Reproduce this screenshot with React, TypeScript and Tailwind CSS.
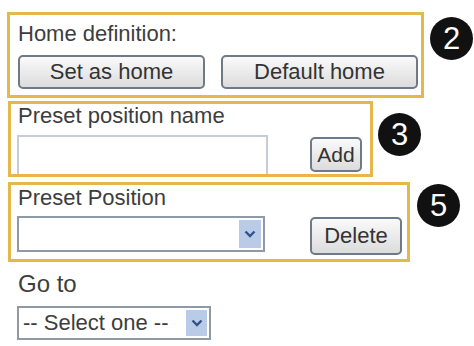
import React from "react";

const font = { fontFamily: '"Liberation Sans", Arial, sans-serif' };

function Badge({ n }: { n: string }) {
  return (
    <div className="flex h-[43px] w-[43px] items-center justify-center rounded-full bg-[#111] text-[31px] leading-none text-white">
      {n}
    </div>
  );
}

function Btn({ children, className }: { children: React.ReactNode; className: string }) {
  return (
    <button
      className={`rounded-[5px] border-2 border-[#6f7a88] bg-gradient-to-b from-[#fafafa] to-[#dcdcdc] leading-none text-[#333] ${className}`}
    >
      {children}
    </button>
  );
}

function Arrow({ className }: { className: string }) {
  return (
    <div className={`flex items-center justify-center bg-[#b9cbe6] ${className}`}>
      <svg width="12" height="8" viewBox="0 0 12 8">
        <path d="M1.5 1.5 L6 6 L10.5 1.5" fill="none" stroke="#34528c" strokeWidth="2.4" />
      </svg>
    </div>
  );
}

export default function App() {
  return (
    <div className="h-[346px] w-[474px] bg-white text-[#3d3d3d]" style={font}>
      <div className="flex flex-col pl-[7px] pt-[12px]">
        {/* home definition */}
        <div className="flex items-start">
          <div className="h-[86px] w-[417px] border-[3px] border-[#e6b84c] pl-[8px] pr-[3px] pt-[8px]">
            <div className="text-[22px] leading-[22px]">Home definition:</div>
            <div className="mt-[10px] flex gap-[16px]">
              <Btn className="h-[34px] w-[187px] text-[22px]">Set as home</Btn>
              <Btn className="h-[34px] w-[197px] text-[22px]">Default home</Btn>
            </div>
          </div>
          <div className="ml-[6px] mt-[5px]">
            <Badge n="2" />
          </div>
        </div>

        {/* preset name */}
        <div className="mt-[3px] flex items-start pl-[1px]">
          <div className="flex h-[76px] w-[365px] flex-col border-[3px] border-[#e6b84c] pl-[6px] pt-[1px]">
            <div className="pl-[1px] text-[22px] leading-[22px]">Preset position name</div>
            <div className="mt-[8px] flex flex-1 items-start">
              <div className="h-full w-[251px] border-2 border-b-0 border-[#c5ccd6] bg-white" />
              <Btn className="ml-[42px] mt-[2px] h-[35px] w-[52px] text-[21px]">Add</Btn>
            </div>
          </div>
          <div className="ml-[5px] mt-[12px]">
            <Badge n="3" />
          </div>
        </div>

        {/* preset position */}
        <div className="mt-[5px] flex items-start pl-[1px]">
          <div className="h-[80px] w-[402px] border-[3px] border-[#e6b84c] pl-[6px] pt-[2px]">
            <div className="pl-[1px] text-[22px] leading-[22px]">Preset Position</div>
            <div className="mt-[7px] flex items-start">
              <div className="flex h-[36px] w-[248px] justify-end border-2 border-[#8f9aa8] bg-white p-[2px]">
                <Arrow className="w-[22px]" />
              </div>
              <Btn className="ml-[45px] mt-[1px] h-[38px] w-[92px] text-[22px]">Delete</Btn>
            </div>
          </div>
          <div className="ml-[7px] mt-[2px]">
            <Badge n="5" />
          </div>
        </div>

        {/* go to */}
        <div className="mt-[8px] pl-[11px] text-[24px] leading-[28px]">Go to</div>
        <div className="ml-[10px] mt-[8px] flex h-[34px] w-[194px] items-center border-2 border-[#8f9aa8] bg-white p-[2px]">
          <span className="flex-1 whitespace-nowrap pl-[2px] text-[22px] leading-none">-- Select one --</span>
          <Arrow className="h-full w-[21px]" />
        </div>
      </div>
    </div>
  );
}
